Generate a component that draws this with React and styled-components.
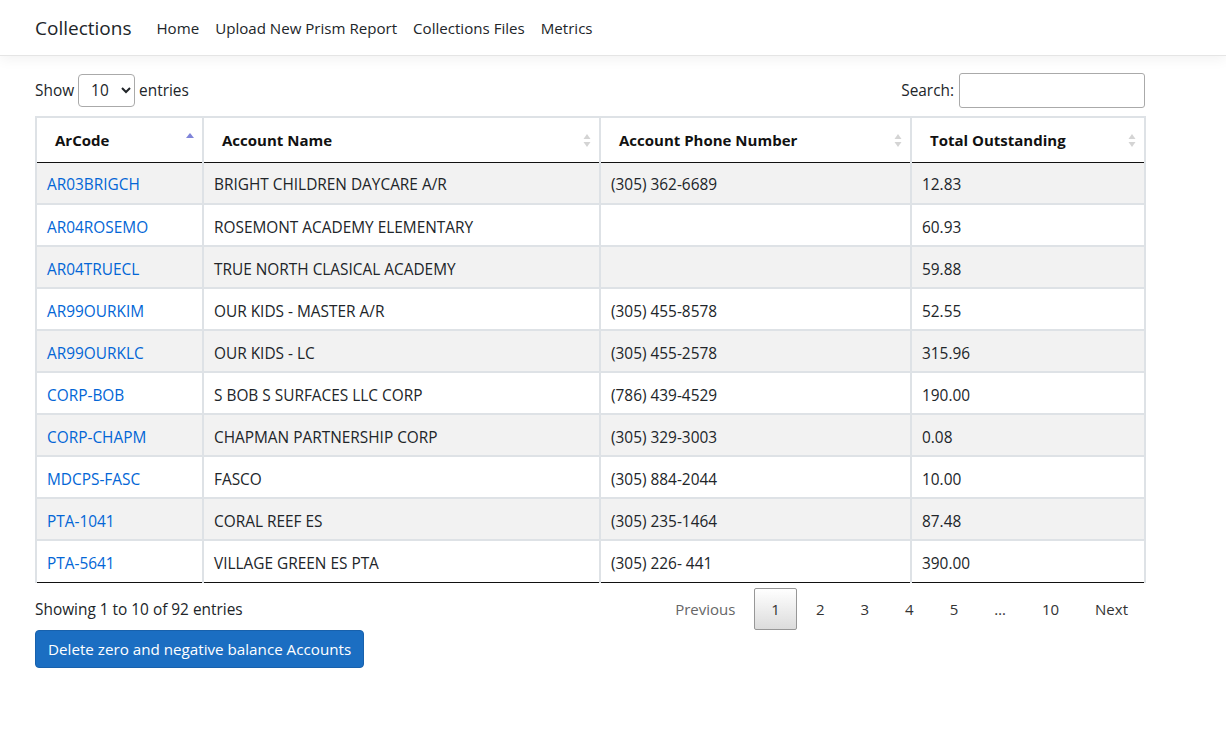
import React from "react";
import styled, { createGlobalStyle } from "styled-components";

const Global = createGlobalStyle`
  html, body { margin: 0; padding: 0; background: #fff; }
  body {
    font-family: "Open Sans", "Noto Sans", "Liberation Sans", sans-serif;
    font-size: 15.4px;
    color: #212529;
  }
  * { box-sizing: border-box; }
`;

const Nav = styled.header`
  height: 56px;
  border-bottom: 1px solid #e5e5e5;
  box-shadow: 0 4px 12px rgba(0, 0, 0, 0.05);
  display: flex;
  align-items: center;
  padding-left: 35px;
  font-size: 15.1px;
`;

const Brand = styled.a`
  font-size: 19px;
  color: #212529;
  margin-right: 17px;
  text-decoration: none;
`;

const NavLink = styled.a`
  color: #212529;
  padding: 0 8px;
  text-decoration: none;
`;

const Main = styled.main`
  width: 1110px;
  margin-left: 35px;
  padding-top: 16px;
`;

const TopBar = styled.div`
  display: flex;
  justify-content: space-between;
  align-items: center;
  height: 36px;
  margin-bottom: 8px;
`;

const Label = styled.label`
  display: flex;
  align-items: center;
  gap: 4px;
`;

const Select = styled.select`
  width: 57px;
  height: 33px;
  border: 1px solid #aaa;
  border-radius: 4px;
  padding: 0 4px 0 8px;
  font: inherit;
  color: #212529;
  background: #fff;
`;

const SearchInput = styled.input`
  width: 186px;
  height: 35px;
  border: 1px solid #aaa;
  border-radius: 3px;
  margin-left: 1px;
`;

const Table = styled.table`
  width: 1109px;
  border-collapse: collapse;
  table-layout: fixed;
  border: 2px solid #dee2e6;
  border-bottom: 1px solid #111;
`;

const Th = styled.th`
  position: relative;
  text-align: left;
  font-weight: 700;
  font-size: 15px;
  padding: 10px 18px;
  height: 45px;
  border-left: 2px solid #dee2e6;
  border-right: 2px solid #dee2e6;
  border-bottom: 1px solid #111;
  color: #111;
`;

const SortIcon = styled.svg`
  position: absolute;
  right: 7px;
  top: 14px;
`;

const Tr = styled.tr`
  background: ${(p) => (p.$odd ? "#f2f2f2" : "#fff")};
`;

const Td = styled.td`
  padding: 10px 10px 6px;
  height: 42px;
  border: 2px solid #dee2e6;
  border-bottom-width: ${(p) => (p.$last ? "0" : "2px")};
  border-top-width: ${(p) => (p.$first ? "0" : "2px")};
  white-space: nowrap;
`;

const Link = styled.a`
  color: #0366d6;
  text-decoration: none;
`;

const BottomBar = styled.div`
  display: flex;
  justify-content: space-between;
  align-items: center;
  padding-top: 5px;
`;

const Info = styled.div`
  align-self: flex-start;
  margin-top: 11px;
`;

const Pager = styled.div`
  display: flex;
  align-items: center;
  font-size: 15px;
`;

const PageBtn = styled.span`
  display: inline-flex;
  align-items: center;
  justify-content: center;
  min-width: 42px;
  height: 42px;
  padding: 0 16px;
  margin-left: 2px;
  border: 1px solid ${(p) => (p.$current ? "#979797" : "transparent")};
  border-radius: 2px;
  background: ${(p) =>
    p.$current ? "linear-gradient(to bottom, #fff 0%, #dcdcdc 100%)" : "transparent"};
  color: ${(p) => (p.$disabled ? "#666" : "#333")};
`;

const Button = styled.button`
  margin-top: 0;
  background: #1b6ec2;
  border: 1px solid #1861ac;
  color: #fff;
  font: inherit;
  font-size: 15.2px;
  padding: 6px 12px;
  height: 38px;
  border-radius: 4px;
`;

const rows = [
  ["AR03BRIGCH", "BRIGHT CHILDREN DAYCARE A/R", "(305) 362-6689", "12.83"],
  ["AR04ROSEMO", "ROSEMONT ACADEMY ELEMENTARY", "", "60.93"],
  ["AR04TRUECL", "TRUE NORTH CLASICAL ACADEMY", "", "59.88"],
  ["AR99OURKIM", "OUR KIDS - MASTER A/R", "(305) 455-8578", "52.55"],
  ["AR99OURKLC", "OUR KIDS - LC", "(305) 455-2578", "315.96"],
  ["CORP-BOB", "S BOB S SURFACES LLC CORP", "(786) 439-4529", "190.00"],
  ["CORP-CHAPM", "CHAPMAN PARTNERSHIP CORP", "(305) 329-3003", "0.08"],
  ["MDCPS-FASC", "FASCO", "(305) 884-2044", "10.00"],
  ["PTA-1041", "CORAL REEF ES", "(305) 235-1464", "87.48"],
  ["PTA-5641", "VILLAGE GREEN ES PTA", "(305) 226- 441", "390.00"],
];

const cols = [
  ["ArCode", 167, "asc"],
  ["Account Name", 397, "both"],
  ["Account Phone Number", 311, "both"],
  ["Total Outstanding", 234, "both"],
];

function Sort({ mode }) {
  if (mode === "asc") {
    return (
      <SortIcon width="10" height="18" viewBox="0 0 10 18">
        <path d="M1 6 L5 1 L9 6 Z" fill="#7f84d9" />
      </SortIcon>
    );
  }
  return (
    <SortIcon width="10" height="18" viewBox="0 0 10 18">
      <path d="M1.5 7 L5 2 L8.5 7 Z" fill="#d4d4d4" />
      <path d="M1.5 10 L5 15 L8.5 10 Z" fill="#d4d4d4" />
    </SortIcon>
  );
}

export default function App() {
  return (
    <>
      <Global />
      <Nav>
        <Brand href="#">Collections</Brand>
        <NavLink href="#">Home</NavLink>
        <NavLink href="#">Upload New Prism Report</NavLink>
        <NavLink href="#">Collections Files</NavLink>
        <NavLink href="#">Metrics</NavLink>
      </Nav>
      <Main>
        <TopBar>
          <Label>
            Show
            <Select defaultValue="10">
              <option>10</option>
              <option>25</option>
              <option>50</option>
              <option>100</option>
            </Select>
            entries
          </Label>
          <Label>
            Search:
            <SearchInput type="search" />
          </Label>
        </TopBar>
        <Table>
          <colgroup>
            {cols.map(([n, w]) => (
              <col key={n} style={{ width: w }} />
            ))}
          </colgroup>
          <thead>
            <tr>
              {cols.map(([n, , m]) => (
                <Th key={n}>
                  {n}
                  <Sort mode={m} />
                </Th>
              ))}
            </tr>
          </thead>
          <tbody>
            {rows.map((r, i) => (
              <Tr key={r[0]} $odd={i % 2 === 0}>
                {r.map((c, j) => (
                  <Td key={j} $first={i === 0} $last={i === rows.length - 1}>
                    {j === 0 ? <Link href="#">{c}</Link> : c}
                  </Td>
                ))}
              </Tr>
            ))}
          </tbody>
        </Table>
        <BottomBar>
          <Info>Showing 1 to 10 of 92 entries</Info>
          <Pager>
            <PageBtn $disabled>Previous</PageBtn>
            <PageBtn $current>1</PageBtn>
            <PageBtn>2</PageBtn>
            <PageBtn>3</PageBtn>
            <PageBtn>4</PageBtn>
            <PageBtn>5</PageBtn>
            <PageBtn>…</PageBtn>
            <PageBtn>10</PageBtn>
            <PageBtn>Next</PageBtn>
          </Pager>
        </BottomBar>
        <Button>Delete zero and negative balance Accounts</Button>
      </Main>
    </>
  );
}
